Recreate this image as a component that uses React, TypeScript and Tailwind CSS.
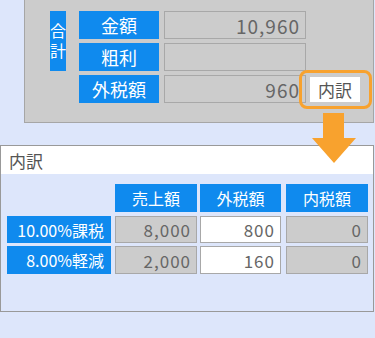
import React from "react";

const blue = "bg-[#0f8aee] text-white";

const TotalRow = ({ label, value }: { label: string; value: string }) => (
  <div className="flex h-[28px] gap-[5px]">
    <div className={`${blue} flex w-[80px] items-center justify-center text-[18px]`}>{label}</div>
    <div className="flex w-[142px] items-center justify-end border border-[#a8a8a8] bg-[#cccccc] pr-[5px] text-[19px] tracking-[1px] text-[#666666]">
      {value}
    </div>
  </div>
);

const Cell = ({ value, white, className = "" }: { value: string; white?: boolean; className?: string }) => (
  <div
    className={`flex items-center justify-end border border-[#a8a8a8] pr-[5px] text-[17px] tracking-[1px] text-[#666666] ${
      white ? "bg-white" : "bg-[#cccccc]"
    } ${className}`}
  >
    {value}
  </div>
);

export default function App() {
  return (
    <div className="relative h-[338px] w-[375px] overflow-hidden bg-[#dde6fb] font-['Noto_Sans_CJK_JP',sans-serif] leading-none">
      {/* 合計 panel */}
      <div className="ml-[24px] flex h-[123px] w-[350px] gap-[13px] border border-t-0 border-[#a6a6a6] bg-[#cccccc] pl-[25px] pt-[11px]">
        <div className={`${blue} flex h-[60px] w-[16px] items-center justify-center pt-[4px] text-[16px]`}>
          <span className="tracking-[4px] [writing-mode:vertical-rl]">合計</span>
        </div>
        <div className="flex flex-col gap-[4px]">
          <TotalRow label="金額" value="10,960" />
          <TotalRow label="粗利" value="" />
          <div className="flex h-[28px]">
            <TotalRow label="外税額" value="960" />
            <div className="ml-[4px] mt-[2px] flex h-[25px] w-[50px] items-center justify-center bg-white text-[17px] text-[#555555]">
              内訳
            </div>
          </div>
        </div>
      </div>

      {/* highlight + arrow */}
      <div className="absolute left-[299px] top-[70px] h-[39px] w-[73px] rounded-[8px] border-[3px] border-[#f8a22e]" />
      <svg className="absolute left-[312px] top-[113px]" width="44" height="50" viewBox="0 0 44 50">
        <path d="M11 0h21v25h12L22 50 0 25h11z" fill="#f8a22e" />
      </svg>

      {/* 内訳 panel */}
      <div className="mt-[22px] h-[167px] w-[374px] border border-[#999999]">
        <div className="flex h-[28px] items-center bg-white pl-[8px] text-[17px] text-[#555555]">内訳</div>
        <div className="flex flex-col pl-[6px] pt-[10px]">
          <div className="flex h-[28px] text-[16px]">
            <div className="w-[108px]" />
            <div className={`${blue} flex w-[82px] items-center justify-center`}>売上額</div>
            <div className={`${blue} ml-[3px] flex w-[81px] items-center justify-center`}>外税額</div>
            <div className={`${blue} ml-[5px] flex w-[82px] items-center justify-center`}>内税額</div>
          </div>
          <div className="mt-[4px] flex h-[27px]">
            <div className={`${blue} flex w-[104px] items-center justify-end pr-[7px] text-[16px]`}>10.00%課税</div>
            <Cell value="8,000" className="ml-[4px] w-[82px]" />
            <Cell value="800" white className="ml-[3px] w-[81px]" />
            <Cell value="0" className="ml-[5px] w-[82px]" />
          </div>
          <div className="mt-[3px] flex h-[28px]">
            <div className={`${blue} flex w-[104px] items-center justify-end pr-[7px] text-[16px]`}>8.00%軽減</div>
            <Cell value="2,000" className="ml-[4px] w-[82px]" />
            <Cell value="160" white className="ml-[3px] w-[81px]" />
            <Cell value="0" className="ml-[5px] w-[82px]" />
          </div>
        </div>
      </div>
    </div>
  );
}
